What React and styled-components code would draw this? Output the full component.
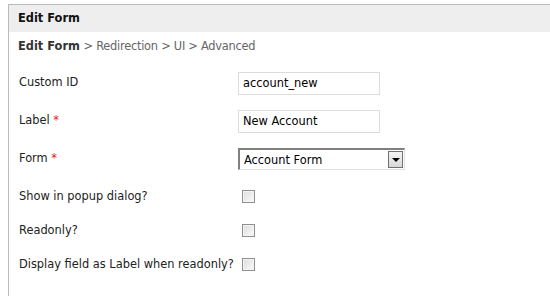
import React from "react";
import styled, { createGlobalStyle } from "styled-components";

const GlobalStyle = createGlobalStyle`
  html, body {
    margin: 0;
    padding: 0;
    background: #fff;
  }
  body {
    font-family: "DejaVu Sans", Verdana, sans-serif;
    font-size: 11.4px;
    color: #222;
  }
`;

const fields = [
  { label: "Custom ID", type: "text", value: "account_new" },
  { label: "Label", required: true, type: "text", value: "New Account" },
  { label: "Form", required: true, type: "select", value: "Account Form" },
];

const checks = [
  "Show in popup dialog?",
  "Readonly?",
  "Display field as Label when readonly?",
];

export default function App() {
  return (
    <>
      <GlobalStyle />
      <Page>
        <Panel>
          <Header>Edit Form</Header>
          <Crumbs>
            <b>Edit Form</b> <span>&gt; Redirection &gt; UI &gt; Advanced</span>
          </Crumbs>
          <FormGrid>
            {fields.map((f) => (
              <Row key={f.label} $short={f.type === "select"}>
                <Label>
                  {f.label}
                  {f.required && <Star> *</Star>}
                </Label>
                {f.type === "select" ? (
                  <Select>
                    <span>{f.value}</span>
                    <DropButton>
                      <Arrow />
                    </DropButton>
                  </Select>
                ) : (
                  <TextInput>{f.value}</TextInput>
                )}
              </Row>
            ))}
            {checks.map((c) => (
              <CheckRow key={c}>
                <CheckLabel>{c}</CheckLabel>
                <Box />
              </CheckRow>
            ))}
          </FormGrid>
        </Panel>
      </Page>
    </>
  );
}

const Page = styled.div`
  padding: 4px 0 0 8px;
  height: 296px;
  box-sizing: border-box;
`;

const Panel = styled.div`
  border-top: 1px solid #bbb;
  border-left: 1px solid #bbb;
  height: 100%;
`;

const Header = styled.div`
  background: #eee;
  height: 27px;
  line-height: 27px;
  padding-left: 9px;
  font-weight: bold;
  color: #111;
`;

const Crumbs = styled.div`
  padding: 7px 0 0 9px;
  height: 20px;
  color: #666;
  & b {
    color: #333;
  }
  & span {
    letter-spacing: -0.25px;
  }
`;

const FormGrid = styled.div`
  display: flex;
  flex-direction: column;
  padding: 13px 0 0 10px;
`;

const Row = styled.div`
  display: grid;
  grid-template-columns: 219px auto;
  align-items: start;
  height: ${(p) => (p.$short ? "31px" : "38px")};
`;

const CheckRow = styled.div`
  display: flex;
  align-items: center;
  height: 34px;
`;

const Label = styled.div`
  padding-top: 3px;
  color: #222;
  white-space: nowrap;
`;

const CheckLabel = styled.div`
  width: 223px;
  color: #222;
  white-space: nowrap;
`;

const Star = styled.span`
  color: #e22;
`;

const TextInput = styled.div`
  width: 142px;
  height: 23px;
  box-sizing: border-box;
  border: 1px solid #dcdcdc;
  padding: 0 4px;
  line-height: 21px;
  color: #000;
`;

const Select = styled.div`
  width: 167px;
  height: 22px;
  box-sizing: border-box;
  border-top: 2px solid #808080;
  border-left: 2px solid #808080;
  border-right: 1px solid #e0e0e0;
  border-bottom: 1px solid #e0e0e0;
  display: flex;
  align-items: center;
  justify-content: space-between;
  padding-left: 4px;
  color: #000;
`;

const DropButton = styled.div`
  width: 15px;
  height: 17px;
  box-sizing: border-box;
  border: 1px solid #707070;
  background: linear-gradient(#f4f4f4, #d8d8d8);
  display: flex;
  align-items: center;
  justify-content: center;
  margin-right: 1px;
`;

const Arrow = styled.div`
  width: 0;
  height: 0;
  border-left: 4px solid transparent;
  border-right: 4px solid transparent;
  border-top: 4px solid #000;
`;

const Box = styled.div`
  width: 13px;
  height: 13px;
  box-sizing: border-box;
  border: 1px solid #8f8f8f;
  box-shadow: inset 0 0 0 1px #f4f4f4;
  background: linear-gradient(135deg, #dcdcdc, #fbfbfb);
`;
